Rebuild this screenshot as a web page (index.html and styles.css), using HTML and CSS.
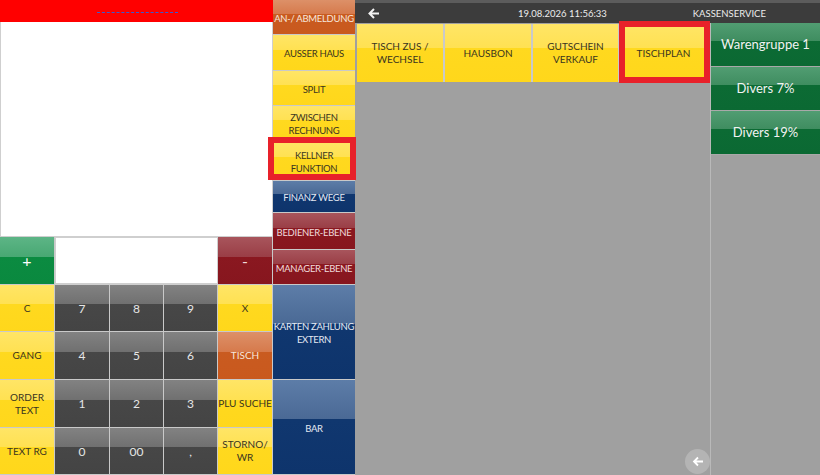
FILE: index.html
```html
<!DOCTYPE html>
<html lang="de">
<head>
    <meta charset="UTF-8">
    <title>Kasse</title>
    <link rel="stylesheet" href="styles.css">
</head>
<body>
<div class="pos">
    <!-- Bon + Zahlenfeld -->
    <section class="left">
        <div class="receipt">
            <div class="receipt-head"><span class="receipt-line"></span></div>
            <div class="receipt-body"></div>
        </div>
        <div class="pad">
            <button class="key green big">+</button>
            <div class="entry"></div>
            <button class="key red big">-</button>

            <button class="key yellow">C</button>
            <button class="key dark">7</button>
            <button class="key dark">8</button>
            <button class="key dark">9</button>
            <button class="key yellow">X</button>

            <button class="key yellow">GANG</button>
            <button class="key dark">4</button>
            <button class="key dark">5</button>
            <button class="key dark">6</button>
            <button class="key orange">TISCH</button>

            <button class="key yellow">ORDER<br>TEXT</button>
            <button class="key dark">1</button>
            <button class="key dark">2</button>
            <button class="key dark">3</button>
            <button class="key yellow">PLU SUCHE</button>

            <button class="key yellow">TEXT RG</button>
            <button class="key dark">0</button>
            <button class="key dark">00</button>
            <button class="key dark">,</button>
            <button class="key yellow">STORNO/<br>WR</button>
        </div>
    </section>

    <!-- Funktionsleiste -->
    <nav class="menu">
        <button class="key orange">AN-/ ABMELDUNG</button>
        <button class="key yellow">AUSSER HAUS</button>
        <button class="key yellow">SPLIT</button>
        <button class="key yellow">ZWISCHEN<br>RECHNUNG</button>
        <button class="key yellow marked">KELLNER<br>FUNKTION</button>
        <button class="key blue">FINANZ WEGE</button>
        <button class="key red">BEDIENER-EBENE</button>
        <button class="key red">MANAGER-EBENE</button>
        <button class="key blue">KARTEN ZAHLUNG<br>EXTERN</button>
        <button class="key blue">BAR</button>
    </nav>

    <!-- Kellnerfunktionen -->
    <section class="main">
        <header class="topbar">
            <span class="topbar-back">
                <svg width="12" height="11" viewBox="0 0 12 11"><path d="M11 5.5H2M6 1L1.5 5.5L6 10" fill="none" stroke="#f2f2f2" stroke-width="2"/></svg>
            </span>
            <span class="topbar-date">19.08.2026 11:56:33</span>
            <span class="topbar-title">KASSENSERVICE</span>
        </header>
        <div class="main-body">
            <div class="work">
                <div class="actions">
                    <button class="key yellow">TISCH ZUS /<br>WECHSEL</button>
                    <button class="key yellow">HAUSBON</button>
                    <button class="key yellow">GUTSCHEIN<br>VERKAUF</button>
                    <button class="key yellow marked-top">TISCHPLAN</button>
                </div>
                <button class="round-back">
                    <svg width="12" height="11" viewBox="0 0 12 11"><path d="M11 5.5H2M6 1.5L2 5.5L6 9.5" fill="none" stroke="#fff" stroke-width="1.8"/></svg>
                </button>
            </div>
            <div class="groups">
                <button class="key forest">Warengruppe 1</button>
                <button class="key forest">Divers 7%</button>
                <button class="key forest">Divers 19%</button>
            </div>
        </div>
    </section>
</div>
</body>
</html>
```

FILE: styles.css
```css
body {
    margin: 0;
    font-family: "Lato", "Liberation Sans", sans-serif;
    background: #a0a0a0;
}
.pos {
    display: flex;
    width: 820px;
    height: 475px;
    overflow: hidden;
}
.left {
    width: 273px;
    flex: none;
    display: flex;
    flex-direction: column;
}
.receipt {
    height: 237px;
    display: flex;
    flex-direction: column;
}
.receipt-head {
    height: 22px;
    background: #ff0000;
}
.receipt-line {
    display: block;
    width: 81px;
    margin: 12px 0 0 97px;
    border-top: 1px dashed #3a5bd0;
}
.receipt-body {
    flex: 1;
    background: #fff;
    border: 1px solid #cfcfcf;
    border-top: none;
}
.pad {
    display: grid;
    grid-template-columns: 55px 55px 54px 54px 55px;
    grid-template-rows: 48px 47px 48px 48px 47px;
    background: #c9c9c9;
}
.entry {
    grid-column: span 3;
    background: #fff;
    border: 1px solid #cfcfcf;
    border-bottom-width: 2px;
}
.key {
    border: none;
    margin: 0;
    padding: 0;
    min-width: 0;
    font-family: inherit;
    font-size: 10px;
    line-height: 13px;
    text-align: center;
    color: #fff;
    box-sizing: border-box;
    border-right: 1px solid #c9c9c9;
    border-bottom: 1px solid #c9c9c9;
    cursor: pointer;
    white-space: nowrap;
}
.big {
    font-size: 16px;
}
.yellow {
    color: #3a3520;
    background: linear-gradient(#ffe566, #ffe152 42%, #ffd91f 42%, #ffd71b);
}
.dark {
    font-size: 12px;
    color: #e6e6e6;
    background: linear-gradient(#828282, #707070 42%, #474747 42%, #444);
}
.green {
    background: linear-gradient(#5db586, #48a873 42%, #0b8b41 42%, #0a893f);
}
.red {
    color: #f0dcdc;
    background: linear-gradient(#a8555c, #9a3e46 42%, #8a1820 42%, #87161e);
}
.orange {
    color: #f6e6dc;
    background: linear-gradient(#dd9068, #d67a4c 42%, #c95b20 42%, #c9591e);
}
.blue {
    color: #e4e9f2;
    background: linear-gradient(#5d7da8, #4a6995 42%, #10376f 42%, #0e346c);
}
.forest {
    font-size: 13px;
    color: #f2f2f2;
    background: linear-gradient(#519d72, #3f8d60 42%, #0c6b34 42%, #0b6933);
}
.menu {
    width: 82px;
    flex: none;
    display: grid;
    grid-template-columns: 82px;
    grid-template-rows: 35px 36px 35px 35px 40px 32px 37px 35px 95px 95px;
    background: #c9c9c9;
}
.menu .key {
    border-right: none;
    padding-top: 2px;
    font-size: 9.5px;
    letter-spacing: -0.3px;
    overflow: visible;
}
.marked {
    position: relative;
}
.marked::after {
    content: "";
    position: absolute;
    top: -4px;
    left: -5px;
    right: -1px;
    bottom: 0;
    border: 6px solid #e8212a;
}
.main {
    flex: 1;
    display: flex;
    flex-direction: column;
}
.topbar {
    height: 23px;
    box-sizing: border-box;
    border-top: 3px solid #5c5c5c;
    background: #3c3c3c;
    color: #ececec;
    font-size: 9.5px;
    display: flex;
    align-items: center;
}
.topbar-back {
    width: 37px;
    display: flex;
    justify-content: center;
}
.topbar-date {
    margin-left: 126px;
}
.topbar-title {
    margin-left: 86px;
}
.main-body {
    flex: 1;
    display: flex;
}
.work {
    flex: 1;
    position: relative;
    padding: 1px 0 0 2px;
}
.actions {
    display: grid;
    grid-template-columns: 88px 88px 87px 89px;
    height: 58px;
}
.actions .key {
    border-right: 2px solid #c9c9c9;
    border-bottom: none;
}
.marked-top {
    position: relative;
}
.marked-top::after {
    content: "";
    position: absolute;
    top: -3px;
    left: -1px;
    right: -3px;
    bottom: -1px;
    border: 6px solid #e8212a;
}
.round-back {
    position: absolute;
    right: 0;
    bottom: 1px;
    width: 25px;
    height: 25px;
    border: none;
    border-radius: 50%;
    background: #b4b4b4;
    padding: 0;
    display: flex;
    align-items: center;
    justify-content: center;
}
.groups {
    width: 109px;
    flex: none;
    display: flex;
    flex-direction: column;
    border-left: 1px solid #b9b9b9;
}
.groups .key {
    height: 44px;
    border-right: none;
    border-bottom: 1px solid #a9a9a9;
}
```
